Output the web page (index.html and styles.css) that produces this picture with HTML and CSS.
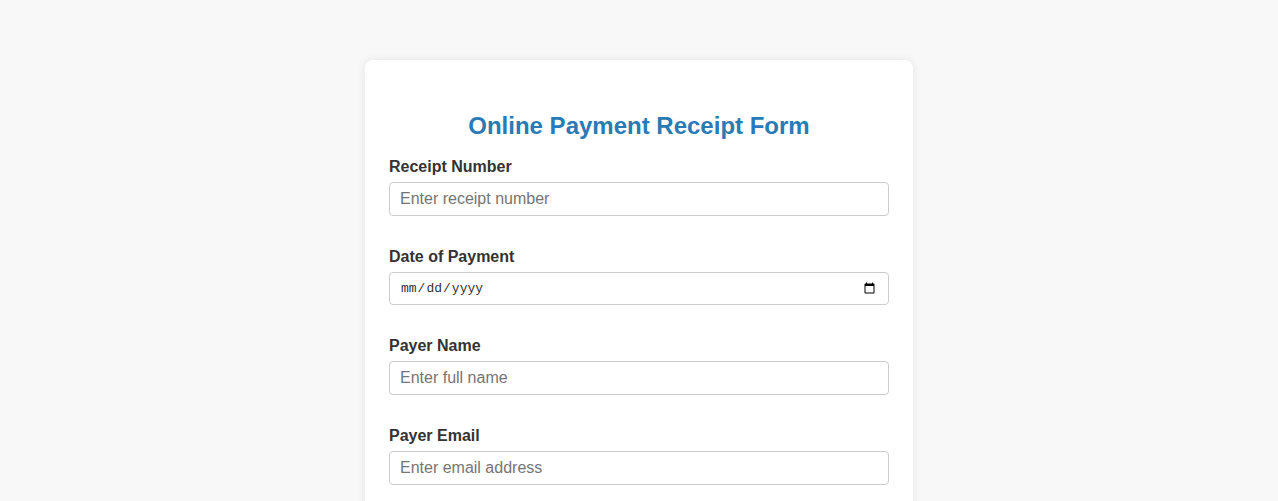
FILE: index.html
```html
<!doctype html>
<html lang="en">

<head>
    <meta charset="UTF-8" />
    <meta name="viewport" content="width=device-width, initial-scale=1.0" />
    <title>Online Payment Receipt Form</title>
    <link rel="stylesheet" href="styles.css">
</head>

<body>
    <div class="container">
        <h2>Online Payment Receipt Form</h2>
        <form>
            <div class="form-group">
                <label for="receipt">Receipt Number</label>
                <input type="text" id="receipt" placeholder="Enter receipt number">
            </div>
            <div class="form-group">
                <label for="date">Date of Payment</label>
                <input type="date" id="date">
            </div>
            <div class="form-group">
                <label for="name">Payer Name</label>
                <input type="text" id="name" placeholder="Enter full name">
            </div>
            <div class="form-group">
                <label for="email">Payer Email</label>
                <input type="email" id="email" placeholder="Enter email address">
            </div>
            <div class="form-group">
                <label for="amount">Amount Paid</label>
                <input type="text" id="amount" placeholder="Enter amount">
            </div>
        </form>
    </div>
</body>

</html>
```

FILE: styles.css
```css
body {
    margin: 0;
    padding: 0;
    background-color: #f8f8f8;
    font-family: "Liberation Sans", Arial, sans-serif;
    color: #333;
}

.container {
    width: 500px;
    margin: 60px auto;
    padding: 30px 24px;
    background-color: #fff;
    border-radius: 8px;
    box-shadow: 0 0 10px rgba(0, 0, 0, 0.08);
}

h2 {
    text-align: center;
    color: #2a7ab5;
    font-size: 24px;
    margin: 22px 0 18px;
}

.form-group {
    margin-bottom: 32px;
}

label {
    display: block;
    font-weight: bold;
    font-size: 16px;
    margin-bottom: 6px;
}

input {
    width: 100%;
    box-sizing: border-box;
    padding: 7px 10px;
    border: 1px solid #ccc;
    border-radius: 4px;
    font-family: "Liberation Sans", Arial, sans-serif;
    font-size: 16px;
    color: #333;
}

input::placeholder {
    color: #757575;
}

input[type="date"] {
    font-family: "Liberation Mono", monospace;
    font-size: 13px;
    height: 33px;
}
```
